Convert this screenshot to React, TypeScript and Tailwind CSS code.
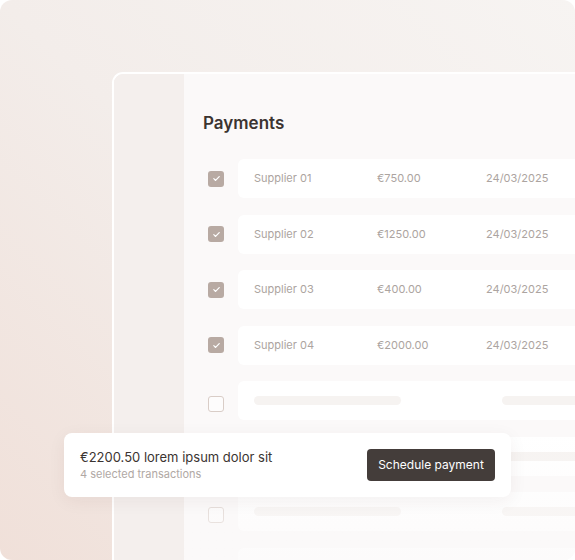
import React from 'react';

const rows = [
  { name: 'Supplier 01', amount: '€750.00', date: '24/03/2025' },
  { name: 'Supplier 02', amount: '€1250.00', date: '24/03/2025' },
  { name: 'Supplier 03', amount: '€400.00', date: '24/03/2025' },
  { name: 'Supplier 04', amount: '€2000.00', date: '24/03/2025' },
];

const Checkbox = ({ checked }: { checked: boolean }) =>
  checked ? (
    <div className="w-4 h-4 shrink-0 rounded-[3px] bg-[#b8aaa3] flex items-center justify-center">
      <svg width="9" height="9" viewBox="0 0 10 10" fill="none">
        <path d="M2 5.2l2 2 4-4.4" stroke="white" strokeWidth="1.3" strokeLinecap="round" strokeLinejoin="round" />
      </svg>
    </div>
  ) : (
    <div className="w-4 h-4 shrink-0 rounded-[3px] border border-[#d9cdc7] bg-[#fdfcfc]" />
  );

const App = () => {
  return (
    <div className="w-[575px] h-[560px] bg-white" style={{ fontFamily: 'Inter, "Noto Sans", sans-serif' }}>
      <div className="relative w-full h-full overflow-hidden rounded-[12px] bg-linear-to-bl from-[#f7f4f2] via-[#f3edea] to-[#f0e0d9] pt-[72px] pl-[112px]">
        <div className="flex h-[600px] w-[520px] rounded-tl-[11px] border-t-2 border-l-2 border-white overflow-hidden">
          <div className="w-[70px] shrink-0 bg-[#f4efed]" />
          <div className="relative flex-1 bg-[#fbf9f9] pt-[37px] pl-[19px]">
            <h1 className="h-6 leading-6 text-[17px] font-semibold text-[#3b3431]">Payments</h1>
            <div className="mt-6 flex flex-col gap-[16.5px] pl-[5px]">
              {rows.map((r) => (
                <div key={r.name} className="flex items-center gap-[14px]">
                  <Checkbox checked />
                  <div className="flex-1 h-[39px] rounded-[6px] bg-white flex items-center pl-4 text-[11px] text-[#aca4a0]">
                    <span className="w-[123px]">{r.name}</span>
                    <span className="w-[109px]">{r.amount}</span>
                    <span>{r.date}</span>
                  </div>
                </div>
              ))}
              {[0, 1, 2, 3].map((i) => (
                <div key={i} className="flex items-center gap-[14px]">
                  <div className="mt-[6px]">
                    <Checkbox checked={false} />
                  </div>
                  <div className="flex-1 h-[39px] rounded-[6px] bg-white flex items-center pl-4">
                    <div className="w-[248px]">
                      <div className="w-[147px] h-[9px] rounded-full bg-[#f6f3f1]" />
                    </div>
                    <div className="w-[120px] h-[9px] rounded-full bg-[#f6f3f1]" />
                  </div>
                </div>
              ))}
            </div>
            <div className="absolute left-0 right-0 top-[360px] h-[130px] bg-linear-to-b from-[#fbf9f9]/0 to-[#fbf9f9]/70" />
          </div>
        </div>

        <div className="absolute left-[64px] top-[433px] w-[447px] h-[64px] rounded-[8px] bg-white shadow-[0_4px_18px_rgba(60,40,30,0.06)] flex items-center justify-between px-4">
          <div className="flex flex-col">
            <span className="text-[13px] leading-[18px] text-[#3b3431]">€2200.50 lorem ipsum dolor sit</span>
            <span className="text-[11px] leading-[16px] text-[#b0a8a4]">4 selected transactions</span>
          </div>
          <button className="h-8 w-[128px] rounded-[4px] bg-[#443d3a] text-white text-[12px]">Schedule payment</button>
        </div>
      </div>
    </div>
  );
};

export default App;
